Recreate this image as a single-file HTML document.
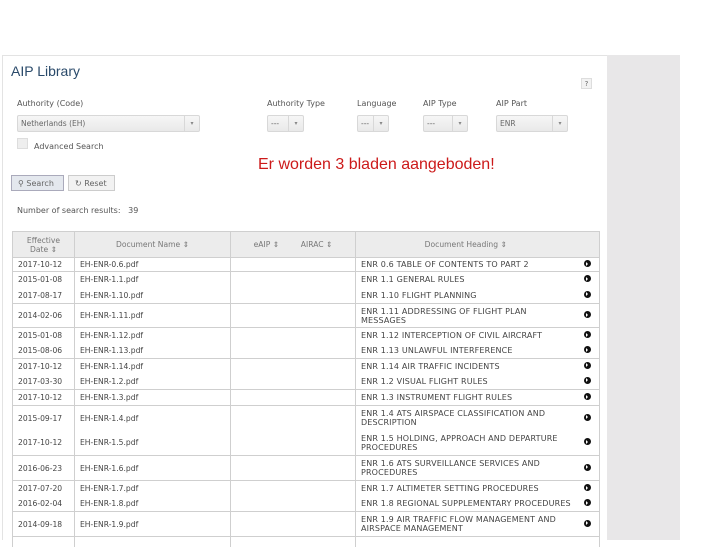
<!DOCTYPE html>
<html><head><meta charset="utf-8"><style>
*{margin:0;padding:0;box-sizing:border-box}
body{width:720px;height:540px;background:#fff;position:relative;overflow:hidden;font-family:"DejaVu Sans","Liberation Sans",sans-serif;color:#555}
.a{position:absolute}
.panel{left:2px;top:55px;width:605px;height:485px;border-top:1px solid #e3e3e3;border-left:1px solid #e3e3e3;background:#fff}
.side{left:607px;top:55px;width:73px;height:485px;background:#e8e7e8}
h1{position:absolute;left:11px;top:63px;font:400 14px "Liberation Sans",sans-serif;color:#2a4a6a}
.lbl{font-size:8px;color:#555}
.sel{height:17px;border:1px solid #d8d8d8;background:linear-gradient(#f6f6f6,#e9e9e9);font-size:7.5px;color:#666;padding:3px 3px;border-radius:2px}
.sel .c{position:absolute;right:0;top:0;width:15px;height:15px;border-left:1px solid #d8d8d8;text-align:center;font-size:6px;line-height:15px;color:#888}
.btn{height:16px;border:1px solid #ccc;font-size:8px;padding:3px 6px;color:#666;background:#f2f2f2}
.red{left:258px;top:156px;font:400 16px "Liberation Sans",sans-serif;color:#cc1a1a}
table{position:absolute;left:12px;top:231px;width:587px;border-collapse:collapse;font-size:7.6px;color:#444;table-layout:fixed}
td,th{border-top:1px solid #cfcfcf;border-left:1px solid #cfcfcf;border-right:1px solid #cfcfcf;padding:0 5px;vertical-align:middle;line-height:9px;white-space:nowrap;overflow:hidden}
th{background:#ececec;font-weight:400;color:#777;height:26px;text-align:center;border-bottom:1px solid #cfcfcf}
td.h{white-space:normal;font-size:8px;letter-spacing:0.15px;padding-right:8px}
td.i{border-left:none;text-align:center;padding:0}
td.h{border-right:none}
.dot{display:inline-block;width:7px;height:7px;border-radius:50%;background:#111;position:relative}
.dot:after{content:"";position:absolute;left:2.5px;top:1.5px;border-left:2.5px solid #fff;border-top:2px solid transparent;border-bottom:2px solid transparent}
tr.n td{border-top:none}
</style></head><body>
<div class="a panel"></div>
<div class="a side"></div>
<h1>AIP Library</h1>
<div class="a" style="left:581px;top:78px;width:11px;height:11px;border:1px solid #ddd;background:#f2f2f2;font-size:7px;text-align:center;line-height:10px;color:#666">?</div>

<div class="a lbl" style="left:17px;top:99px">Authority (Code)</div>
<div class="a sel" style="left:17px;top:115px;width:183px">Netherlands (EH)<span class="c">▾</span></div>
<div class="a lbl" style="left:267px;top:99px">Authority Type</div>
<div class="a sel" style="left:267px;top:115px;width:37px">---<span class="c">▾</span></div>
<div class="a lbl" style="left:357px;top:99px">Language</div>
<div class="a sel" style="left:357px;top:115px;width:32px">---<span class="c">▾</span></div>
<div class="a lbl" style="left:423px;top:99px">AIP Type</div>
<div class="a sel" style="left:423px;top:115px;width:45px">---<span class="c">▾</span></div>
<div class="a lbl" style="left:496px;top:99px">AIP Part</div>
<div class="a sel" style="left:496px;top:115px;width:72px">ENR<span class="c">▾</span></div>

<div class="a" style="left:17px;top:138px;width:11px;height:11px;border:1px solid #ddd;background:#eee"></div>
<div class="a lbl" style="left:34px;top:142px">Advanced Search</div>
<div class="a red">Er worden 3 bladen aangeboden!</div>
<div class="a btn" style="left:11px;top:175px;width:53px;background:#e4e8ee;border-color:#aab">⚲ Search</div>
<div class="a btn" style="left:68px;top:175px;width:47px">↻ Reset</div>
<div class="a lbl" style="left:17px;top:206px">Number of search results: &nbsp;&nbsp;39</div>

<table>
<colgroup><col style="width:62px"><col style="width:156px"><col style="width:125px"><col style="width:220px"><col style="width:24px"></colgroup>
<tr><th style="line-height:9px">Effective<br>Date ⇕</th><th>Document Name ⇕</th><th>eAIP ⇕ &nbsp; &nbsp; &nbsp; &nbsp; AIRAC ⇕</th><th style="border-right:none">Document Heading ⇕</th><th style="border-left:none"></th></tr>
<tr style="height:14px"><td>2017-10-12</td><td>EH-ENR-0.6.pdf</td><td></td><td class="h">ENR 0.6 TABLE OF CONTENTS TO PART 2</td><td class="i"><span class="dot"></span></td></tr>
<tr style="height:16px"><td>2015-01-08</td><td>EH-ENR-1.1.pdf</td><td></td><td class="h">ENR 1.1 GENERAL RULES</td><td class="i"><span class="dot"></span></td></tr>
<tr class="n" style="height:16px"><td>2017-08-17</td><td>EH-ENR-1.10.pdf</td><td></td><td class="h">ENR 1.10 FLIGHT PLANNING</td><td class="i"><span class="dot"></span></td></tr>
<tr style="height:24px"><td>2014-02-06</td><td>EH-ENR-1.11.pdf</td><td></td><td class="h">ENR 1.11 ADDRESSING OF FLIGHT PLAN<br>MESSAGES</td><td class="i"><span class="dot"></span></td></tr>
<tr style="height:16px"><td>2015-01-08</td><td>EH-ENR-1.12.pdf</td><td></td><td class="h">ENR 1.12 INTERCEPTION OF CIVIL AIRCRAFT</td><td class="i"><span class="dot"></span></td></tr>
<tr class="n" style="height:15px"><td>2015-08-06</td><td>EH-ENR-1.13.pdf</td><td></td><td class="h">ENR 1.13 UNLAWFUL INTERFERENCE</td><td class="i"><span class="dot"></span></td></tr>
<tr style="height:15px"><td>2017-10-12</td><td>EH-ENR-1.14.pdf</td><td></td><td class="h">ENR 1.14 AIR TRAFFIC INCIDENTS</td><td class="i"><span class="dot"></span></td></tr>
<tr class="n" style="height:16px"><td>2017-03-30</td><td>EH-ENR-1.2.pdf</td><td></td><td class="h">ENR 1.2 VISUAL FLIGHT RULES</td><td class="i"><span class="dot"></span></td></tr>
<tr style="height:16px"><td>2017-10-12</td><td>EH-ENR-1.3.pdf</td><td></td><td class="h">ENR 1.3 INSTRUMENT FLIGHT RULES</td><td class="i"><span class="dot"></span></td></tr>
<tr style="height:25px"><td>2015-09-17</td><td>EH-ENR-1.4.pdf</td><td></td><td class="h">ENR 1.4 ATS AIRSPACE CLASSIFICATION AND<br>DESCRIPTION</td><td class="i"><span class="dot"></span></td></tr>
<tr class="n" style="height:25px"><td>2017-10-12</td><td>EH-ENR-1.5.pdf</td><td></td><td class="h">ENR 1.5 HOLDING, APPROACH AND DEPARTURE<br>PROCEDURES</td><td class="i"><span class="dot"></span></td></tr>
<tr style="height:25px"><td>2016-06-23</td><td>EH-ENR-1.6.pdf</td><td></td><td class="h">ENR 1.6 ATS SURVEILLANCE SERVICES AND<br>PROCEDURES</td><td class="i"><span class="dot"></span></td></tr>
<tr style="height:16px"><td>2017-07-20</td><td>EH-ENR-1.7.pdf</td><td></td><td class="h">ENR 1.7 ALTIMETER SETTING PROCEDURES</td><td class="i"><span class="dot"></span></td></tr>
<tr class="n" style="height:15px"><td>2016-02-04</td><td>EH-ENR-1.8.pdf</td><td></td><td class="h" style="white-space:nowrap">ENR 1.8 REGIONAL SUPPLEMENTARY PROCEDURES</td><td class="i"><span class="dot"></span></td></tr>
<tr style="height:25px"><td>2014-09-18</td><td>EH-ENR-1.9.pdf</td><td></td><td class="h">ENR 1.9 AIR TRAFFIC FLOW MANAGEMENT AND<br>AIRSPACE MANAGEMENT</td><td class="i"><span class="dot"></span></td></tr>
<tr style="height:10px"><td></td><td></td><td></td><td class="h"></td><td class="i"></td></tr>
</table>
</body></html>
